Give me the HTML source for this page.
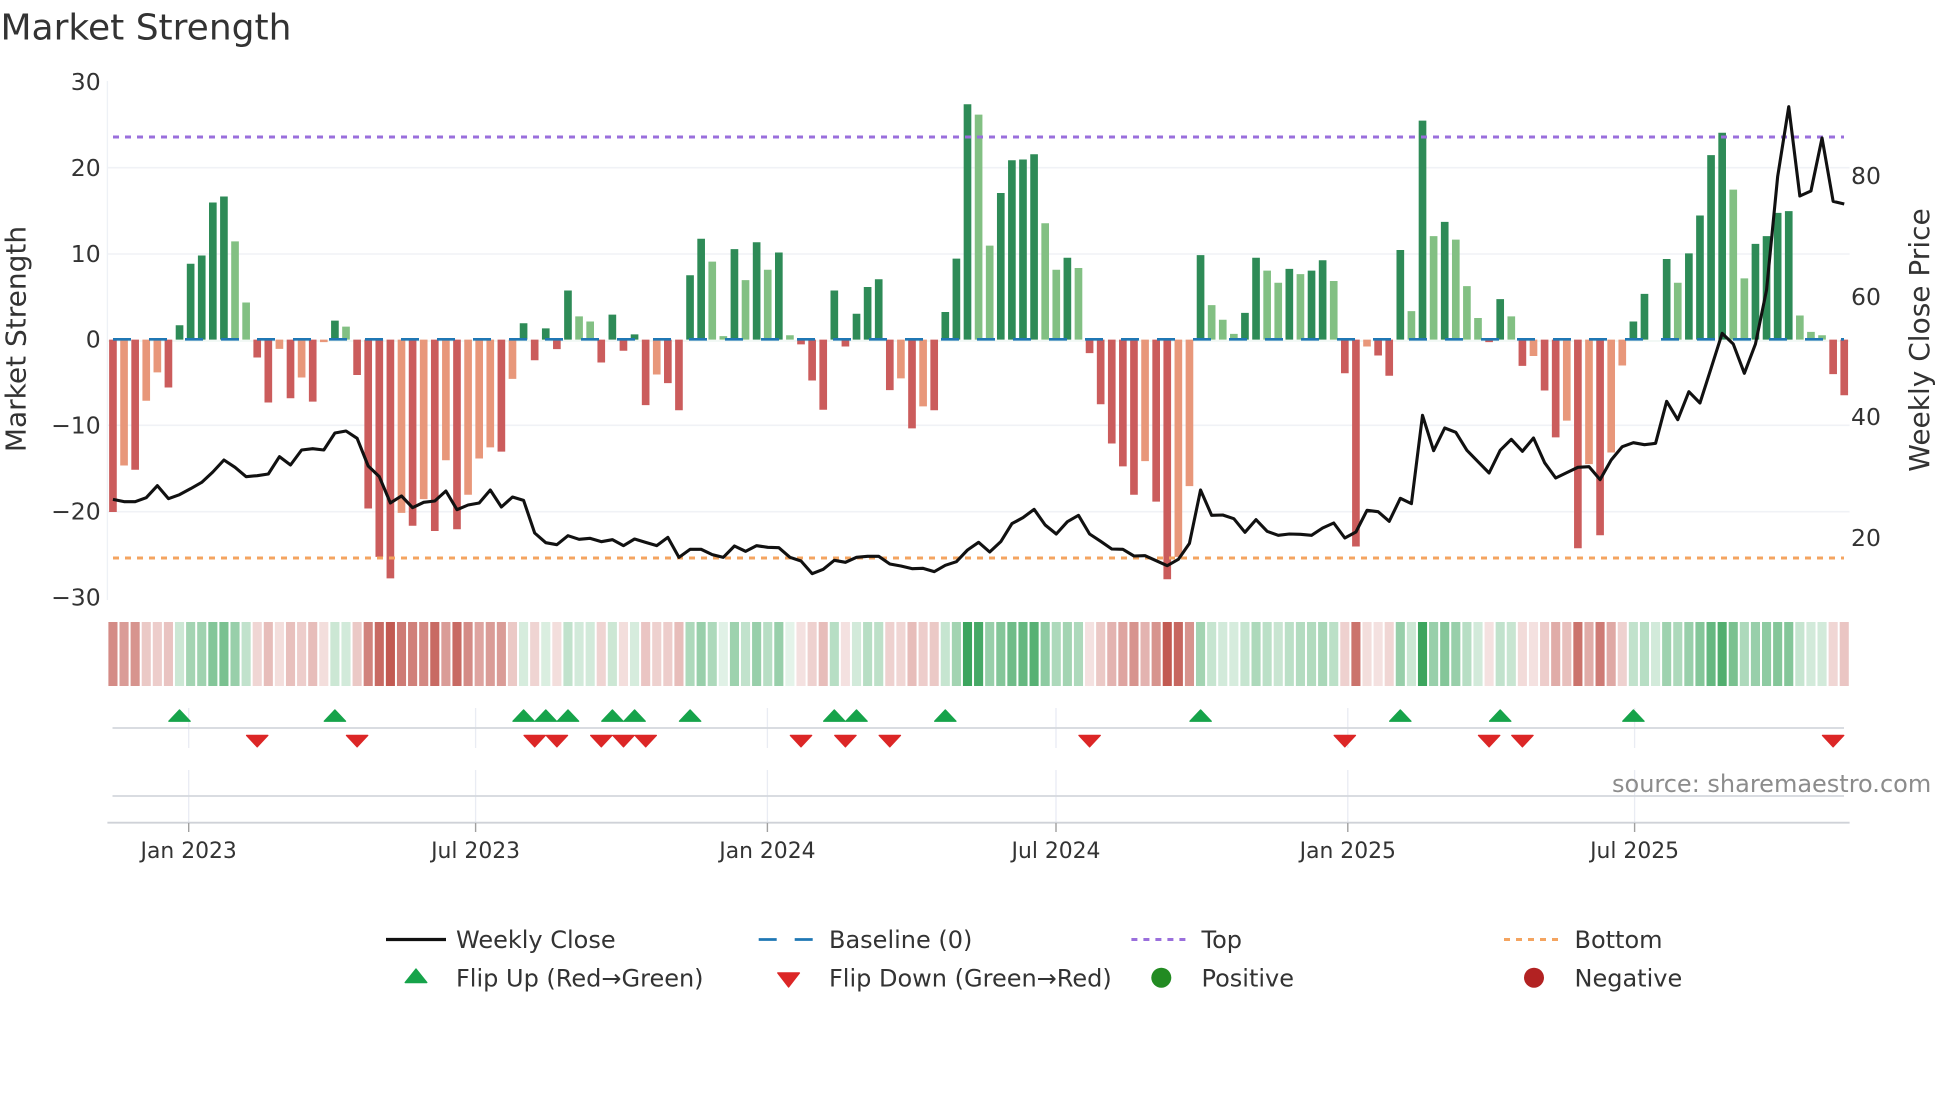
<!DOCTYPE html>
<html lang="en"><head><meta charset="utf-8"><title>Market Strength</title>
<style>html,body{margin:0;padding:0;background:#fff}svg{display:block}text{font-family:"DejaVu Sans","Liberation Sans",sans-serif;fill:#333}</style></head>
<body>
<svg width="1960" height="1102" viewBox="0 0 1960 1102" xmlns="http://www.w3.org/2000/svg">
<rect width="1960" height="1102" fill="#fff"/>
<text x="0.5" y="39.5" font-size="36">Market Strength</text>
<!-- grid -->
<path d="M107.4 167.7H1849.6M107.4 254H1849.6M107.4 425.3H1849.6M107.4 511.7H1849.6" stroke="#f0f2f6" stroke-width="1.6" fill="none"/>
<path d="M107.4 81V600" stroke="#eef1f6" stroke-width="1.3" fill="none"/>
<path d="M107.4 341H1849.6" stroke="#eef6f2" stroke-width="1.5" fill="none"/>
<!-- bars -->
<g transform="translate(112.95 339.6) scale(11.098 -8.62)" fill="none" stroke-width=".69">
<path stroke="#2e8b57" d="M6 0V1.66M7 0V8.8M8 0V9.75M9 0V15.9M10 0V16.6M20 0V2.2M37 0V1.9M39 0V1.3M41 0V5.7M45 0V2.9M47 0V.6M52 0V7.46M53 0V11.7M56 0V10.5M58 0V11.3M60 0V10.1M65 0V5.7M67 0V3M68 0V6.1M69 0V7M75 0V3.2M76 0V9.4M77 0V27.3M80 0V17M81 0V20.8M82 0V20.9M83 0V21.5M86 0V9.5M98 0V9.8M102 0V3.1M103 0V9.5M106 0V8.2M108 0V8M109 0V9.2M116 0V10.4M118 0V25.4M120 0V13.65M125 0V4.7M137 0V2.1M138 0V5.3M140 0V9.35M142 0V10M143 0V14.4M144 0V21.4M145 0V24M148 0V11.1M149 0V12M150 0V14.7M151 0V14.9"/>
<path stroke="#82c083" d="M11 0V11.4M12 0V4.3M21 0V1.5M42 0V2.7M43 0V2.1M54 0V9.05M55 0V.4M57 0V6.9M59 0V8.1M61 0V.5M78 0V26.1M79 0V10.9M84 0V13.5M85 0V8.1M87 0V8.3M99 0V4M100 0V2.3M101 0V.66M104 0V8M105 0V6.6M107 0V7.6M110 0V6.8M117 0V3.3M119 0V12M121 0V11.6M122 0V6.2M123 0V2.5M126 0V2.7M141 0V6.6M146 0V17.4M147 0V7.1M152 0V2.8M153 0V.9M154 0V.5"/>
<path stroke="#cb5c5c" d="M0 0V-20M2 0V-15.1M5 0V-5.55M13 0V-2.07M14 0V-7.3M16 0V-6.8M18 0V-7.2M22 0V-4.1M23 0V-19.6M24 0V-25.2M25 0V-27.7M27 0V-21.6M29 0V-22.2M31 0V-22M35 0V-13M38 0V-2.4M40 0V-1.1M44 0V-2.65M46 0V-1.3M48 0V-7.6M50 0V-5.05M51 0V-8.2M62 0V-.56M63 0V-4.75M64 0V-8.14M66 0V-.8M70 0V-5.86M72 0V-10.3M74 0V-8.2M88 0V-1.57M89 0V-7.5M90 0V-12.05M91 0V-14.7M92 0V-18M94 0V-18.8M95 0V-27.8M111 0V-3.9M112 0V-24M114 0V-1.85M115 0V-4.2M124 0V-.3M127 0V-3.05M129 0V-5.9M130 0V-11.35M132 0V-24.2M134 0V-22.7M155 0V-4M156 0V-6.45"/>
<path stroke="#e8977a" d="M1 0V-14.6M3 0V-7.1M4 0V-3.8M15 0V-1.07M17 0V-4.4M19 0V-.3M26 0V-20.1M28 0V-18.5M30 0V-14M32 0V-18M33 0V-13.8M34 0V-12.5M36 0V-4.55M49 0V-4.05M71 0V-4.5M73 0V-7.75M93 0V-14.1M96 0V-25.2M97 0V-17M113 0V-.8M128 0V-1.9M131 0V-9.4M133 0V-14.45M135 0V-13.1M136 0V-3"/>
</g>
<!-- reference lines -->
<path d="M113 339.3H1844" stroke="#1f77b4" stroke-width="2.6" stroke-dasharray="18 18" fill="none"/>
<path d="M113 137H1844" stroke="#9a6fdc" stroke-width="3" stroke-dasharray="6 6" fill="none"/>
<path d="M113 558H1844" stroke="#f4a460" stroke-width="3" stroke-dasharray="6 6" fill="none"/>
<!-- weekly close -->
<g transform="translate(112.95 330) scale(11.098 .33333)">
<polyline vector-effect="non-scaling-stroke" fill="none" stroke="#111" stroke-width="3.1" stroke-linejoin="round" points="0,508 1,515 2,515 3,503 4,467 5,506 6,494 7,476 8,457 9,426 10,390 11,412 12,440 13,437 14,432 15,380 16,405 17,360 18,356 19,360 20,309 21,303 22,325 23,408 24,440 25,519 26,498 27,533 28,517 29,513 30,483 31,539 32,525 33,519 34,480 35,531 36,501 37,511 38,609 39,638 40,644 41,617 42,628 43,625 44,635 45,629 46,647 47,627 48,637 49,647 50,622 51,682 52,658 53,658 54,674 55,682 56,648 57,664 58,647 59,652 60,653 61,682 62,693 63,731 64,718 65,691 66,697 67,682 68,679 69,679 70,702 71,708 72,716 73,715 74,725 75,706 76,695 77,660 78,637 79,666 80,635 81,581 82,563 83,538 84,585 85,612 86,575 87,556 88,612 89,634 90,657 91,658 92,678 93,677 94,692 95,707 96,688 97,640 98,480 99,556 100,555 101,566 102,607 103,569 104,604 105,616 106,612 107,613 108,616 109,594 110,579 111,624 112,606 113,541 114,545 115,574 116,505 117,521 118,256 119,362 120,294 121,307 122,361 123,395 124,429 125,361 126,328 127,364 128,324 129,398 130,444 131,428 132,412 133,410 134,449 135,390 136,350 137,338 138,344 139,340 140,214 141,269 142,185 143,219 144,115 145,10 146,42 147,130 148,42 149,-120 150,-460 151,-670 152,-402 153,-417 154,-576 155,-386 156,-378"/>
</g>
<!-- y ticks -->
<g font-size="23.5" text-anchor="end">
<text x="100.7" y="90">30</text><text x="100.7" y="176">20</text><text x="100.7" y="262">10</text><text x="100.7" y="347.7">0</text><text x="100.7" y="433.3">−10</text><text x="100.7" y="519.5">−20</text><text x="100.7" y="605.7">−30</text>
</g>
<g font-size="23.5">
<text x="1851" y="184">80</text><text x="1851" y="305">60</text><text x="1851" y="425">40</text><text x="1851" y="546">20</text>
</g>
<text transform="translate(25.5 339) rotate(-90)" font-size="28" text-anchor="middle">Market Strength</text>
<text transform="translate(1929 340) rotate(-90)" font-size="28" text-anchor="middle">Weekly Close Price</text>
<!-- heat strip -->
<g transform="translate(112.95 0) scale(11.098 1)" fill="none" stroke-width=".82">
<g stroke="#c25a52">
<path d="M0 622v64" opacity=".7"/><path d="M1 622v64" opacity=".6"/><path d="M2 622v64" opacity=".65"/><path d="M3 622v64" opacity=".33"/><path d="M4 622v64" opacity=".3"/><path d="M5 622v64" opacity=".36"/><path d="M13 622v64" opacity=".25"/><path d="M14 622v64" opacity=".4"/><path d="M15 622v64" opacity=".2"/><path d="M16 622v64" opacity=".38"/><path d="M17 622v64" opacity=".3"/><path d="M18 622v64" opacity=".4"/><path d="M19 622v64" opacity=".2"/><path d="M22 622v64" opacity=".33"/><path d="M23 622v64" opacity=".75"/><path d="M24 622v64" opacity=".9"/><path d="M25 622v64" opacity="1"/><path d="M26 622v64" opacity=".8"/><path d="M27 622v64" opacity=".77"/><path d="M28 622v64" opacity=".72"/><path d="M29 622v64" opacity=".9"/><path d="M30 622v64" opacity=".6"/><path d="M31 622v64" opacity=".9"/><path d="M32 622v64" opacity=".7"/><path d="M33 622v64" opacity=".55"/><path d="M34 622v64" opacity=".6"/><path d="M35 622v64" opacity=".6"/><path d="M36 622v64" opacity=".33"/><path d="M38 622v64" opacity=".26"/><path d="M40 622v64" opacity=".2"/><path d="M44 622v64" opacity=".26"/><path d="M46 622v64" opacity=".2"/><path d="M48 622v64" opacity=".35"/><path d="M49 622v64" opacity=".28"/><path d="M50 622v64" opacity=".3"/><path d="M51 622v64" opacity=".4"/><path d="M62 622v64" opacity=".18"/><path d="M63 622v64" opacity=".28"/><path d="M64 622v64" opacity=".4"/><path d="M66 622v64" opacity=".18"/><path d="M70 622v64" opacity=".28"/><path d="M71 622v64" opacity=".25"/><path d="M72 622v64" opacity=".4"/><path d="M73 622v64" opacity=".3"/><path d="M74 622v64" opacity=".33"/><path d="M88 622v64" opacity=".18"/><path d="M89 622v64" opacity=".33"/><path d="M90 622v64" opacity=".46"/><path d="M91 622v64" opacity=".55"/><path d="M92 622v64" opacity=".65"/><path d="M93 622v64" opacity=".46"/><path d="M94 622v64" opacity=".65"/><path d="M95 622v64" opacity="1"/><path d="M96 622v64" opacity=".92"/><path d="M97 622v64" opacity=".65"/><path d="M111 622v64" opacity=".28"/><path d="M112 622v64" opacity=".85"/><path d="M113 622v64" opacity=".2"/><path d="M114 622v64" opacity=".18"/><path d="M115 622v64" opacity=".25"/><path d="M124 622v64" opacity=".18"/><path d="M127 622v64" opacity=".22"/><path d="M128 622v64" opacity=".18"/><path d="M129 622v64" opacity=".3"/><path d="M130 622v64" opacity=".5"/><path d="M131 622v64" opacity=".38"/><path d="M132 622v64" opacity=".85"/><path d="M133 622v64" opacity=".5"/><path d="M134 622v64" opacity=".8"/><path d="M135 622v64" opacity=".52"/><path d="M136 622v64" opacity=".28"/><path d="M155 622v64" opacity=".25"/><path d="M156 622v64" opacity=".35"/>
</g>
<g stroke="#32a055">
<path d="M6 622v64" opacity=".25"/><path d="M7 622v64" opacity=".45"/><path d="M8 622v64" opacity=".47"/><path d="M9 622v64" opacity=".6"/><path d="M10 622v64" opacity=".65"/><path d="M11 622v64" opacity=".5"/><path d="M12 622v64" opacity=".3"/><path d="M20 622v64" opacity=".25"/><path d="M21 622v64" opacity=".22"/><path d="M37 622v64" opacity=".2"/><path d="M39 622v64" opacity=".18"/><path d="M41 622v64" opacity=".3"/><path d="M42 622v64" opacity=".22"/><path d="M43 622v64" opacity=".22"/><path d="M45 622v64" opacity=".25"/><path d="M47 622v64" opacity=".2"/><path d="M52 622v64" opacity=".4"/><path d="M53 622v64" opacity=".5"/><path d="M54 622v64" opacity=".4"/><path d="M55 622v64" opacity=".15"/><path d="M56 622v64" opacity=".48"/><path d="M57 622v64" opacity=".3"/><path d="M58 622v64" opacity=".5"/><path d="M59 622v64" opacity=".35"/><path d="M60 622v64" opacity=".5"/><path d="M61 622v64" opacity=".13"/><path d="M65 622v64" opacity=".35"/><path d="M67 622v64" opacity=".22"/><path d="M68 622v64" opacity=".35"/><path d="M69 622v64" opacity=".32"/><path d="M75 622v64" opacity=".28"/><path d="M76 622v64" opacity=".45"/><path d="M77 622v64" opacity=".95"/><path d="M78 622v64" opacity=".9"/><path d="M79 622v64" opacity=".5"/><path d="M80 622v64" opacity=".6"/><path d="M81 622v64" opacity=".7"/><path d="M82 622v64" opacity=".75"/><path d="M83 622v64" opacity=".82"/><path d="M84 622v64" opacity=".55"/><path d="M85 622v64" opacity=".4"/><path d="M86 622v64" opacity=".45"/><path d="M87 622v64" opacity=".4"/><path d="M98 622v64" opacity=".45"/><path d="M99 622v64" opacity=".28"/><path d="M100 622v64" opacity=".22"/><path d="M101 622v64" opacity=".2"/><path d="M102 622v64" opacity=".28"/><path d="M103 622v64" opacity=".4"/><path d="M104 622v64" opacity=".33"/><path d="M105 622v64" opacity=".27"/><path d="M106 622v64" opacity=".33"/><path d="M107 622v64" opacity=".37"/><path d="M108 622v64" opacity=".38"/><path d="M109 622v64" opacity=".42"/><path d="M110 622v64" opacity=".33"/><path d="M116 622v64" opacity=".5"/><path d="M117 622v64" opacity=".25"/><path d="M118 622v64" opacity=".95"/><path d="M119 622v64" opacity=".5"/><path d="M120 622v64" opacity=".6"/><path d="M121 622v64" opacity=".5"/><path d="M122 622v64" opacity=".35"/><path d="M123 622v64" opacity=".22"/><path d="M125 622v64" opacity=".3"/><path d="M126 622v64" opacity=".27"/><path d="M137 622v64" opacity=".3"/><path d="M138 622v64" opacity=".35"/><path d="M139 622v64" opacity=".22"/><path d="M140 622v64" opacity=".47"/><path d="M141 622v64" opacity=".4"/><path d="M142 622v64" opacity=".5"/><path d="M143 622v64" opacity=".6"/><path d="M144 622v64" opacity=".75"/><path d="M145 622v64" opacity=".85"/><path d="M146 622v64" opacity=".65"/><path d="M147 622v64" opacity=".4"/><path d="M148 622v64" opacity=".5"/><path d="M149 622v64" opacity=".55"/><path d="M150 622v64" opacity=".6"/><path d="M151 622v64" opacity=".6"/><path d="M152 622v64" opacity=".28"/><path d="M153 622v64" opacity=".22"/><path d="M154 622v64" opacity=".22"/>
</g>
</g>
<!-- lower axes -->
<path d="M188.7 708V748M475.6 708V748M767.4 708V748M1056 708V748M1347.8 708V748M1634.6 708V748M188.7 770V822M475.6 770V822M767.4 770V822M1056 770V822M1347.8 770V822M1634.6 770V822" stroke="#e9ecf3" stroke-width="1.3" fill="none"/>
<path d="M112.5 728H1844M112.5 796H1844" stroke="#d4d7dd" stroke-width="1.8" fill="none"/>
<path d="M107.4 822.7H1849.6" stroke="#cfd2d8" stroke-width="1.8" fill="none"/>
<path d="M188.7 823V832M475.6 823V832M767.4 823V832M1056 823V832M1347.8 823V832M1634.6 823V832" stroke="#a0a0a0" stroke-width="1.4" fill="none"/>
<!-- flip markers -->
<path fill="#16a34a" stroke="#16a34a" stroke-width="1.4" stroke-linejoin="round" d="M179.5 710l10.6 11.2h-21.2zM334.9 710l10.6 11.2h-21.2zM523.6 710l10.6 11.2h-21.2zM545.8 710l10.6 11.2h-21.2zM568 710l10.6 11.2h-21.2zM612.4 710l10.6 11.2h-21.2zM634.6 710l10.6 11.2h-21.2zM690.1 710l10.6 11.2h-21.2zM834.3 710l10.6 11.2h-21.2zM856.5 710l10.6 11.2h-21.2zM945.3 710l10.6 11.2h-21.2zM1200.6 710l10.6 11.2h-21.2zM1400.3 710l10.6 11.2h-21.2zM1500.2 710l10.6 11.2h-21.2zM1633.4 710l10.6 11.2h-21.2z"/>
<path fill="#dc2626" stroke="#dc2626" stroke-width="1.4" stroke-linejoin="round" d="M257.2 746.8l10.6-11.4h-21.2zM357.1 746.8l10.6-11.4h-21.2zM534.7 746.8l10.6-11.4h-21.2zM556.9 746.8l10.6-11.4h-21.2zM601.3 746.8l10.6-11.4h-21.2zM623.5 746.8l10.6-11.4h-21.2zM645.7 746.8l10.6-11.4h-21.2zM801 746.8l10.6-11.4h-21.2zM845.4 746.8l10.6-11.4h-21.2zM889.8 746.8l10.6-11.4h-21.2zM1089.6 746.8l10.6-11.4h-21.2zM1344.8 746.8l10.6-11.4h-21.2zM1489.1 746.8l10.6-11.4h-21.2zM1522.4 746.8l10.6-11.4h-21.2zM1833.1 746.8l10.6-11.4h-21.2z"/>
<!-- x ticks -->
<g font-size="21.875" text-anchor="middle">
<text x="188.7" y="858">Jan 2023</text><text x="475.6" y="858">Jul 2023</text><text x="767.4" y="858">Jan 2024</text><text x="1056" y="858">Jul 2024</text><text x="1347.8" y="858">Jan 2025</text><text x="1634.6" y="858">Jul 2025</text>
</g>
<text x="1612" y="792" font-size="24" style="fill:#8c8c8c">source: sharemaestro.com</text>
<!-- legend -->
<path d="M386 939.5H446" stroke="#111" stroke-width="3.2" fill="none"/>
<path d="M758.7 939.5H813" stroke="#1f77b4" stroke-width="2.8" stroke-dasharray="18 18" fill="none"/>
<path d="M1131.4 939.5H1186" stroke="#9a6fdc" stroke-width="3" stroke-dasharray="6 6" fill="none"/>
<path d="M1504 939.5H1558.6" stroke="#f4a460" stroke-width="3" stroke-dasharray="6 6" fill="none"/>
<path fill="#16a34a" stroke="#16a34a" stroke-width="1.4" stroke-linejoin="round" d="M416 969l10.8 13.5h-21.6z"/>
<path fill="#dc2626" stroke="#dc2626" stroke-width="1.4" stroke-linejoin="round" d="M788.6 987l10.8-14h-21.6z"/>
<circle cx="1161.3" cy="977.7" r="10" fill="#228b22"/>
<circle cx="1534" cy="977.7" r="10" fill="#b22222"/>
<g font-size="24">
<text x="456" y="948">Weekly Close</text><text x="829" y="948">Baseline (0)</text><text x="1201.5" y="948">Top</text><text x="1574.5" y="948">Bottom</text>
<text x="456" y="986.3">Flip Up (Red→Green)</text><text x="829" y="986.3">Flip Down (Green→Red)</text><text x="1201.5" y="986.3">Positive</text><text x="1574.5" y="986.3">Negative</text>
</g>
</svg>
</body></html>
